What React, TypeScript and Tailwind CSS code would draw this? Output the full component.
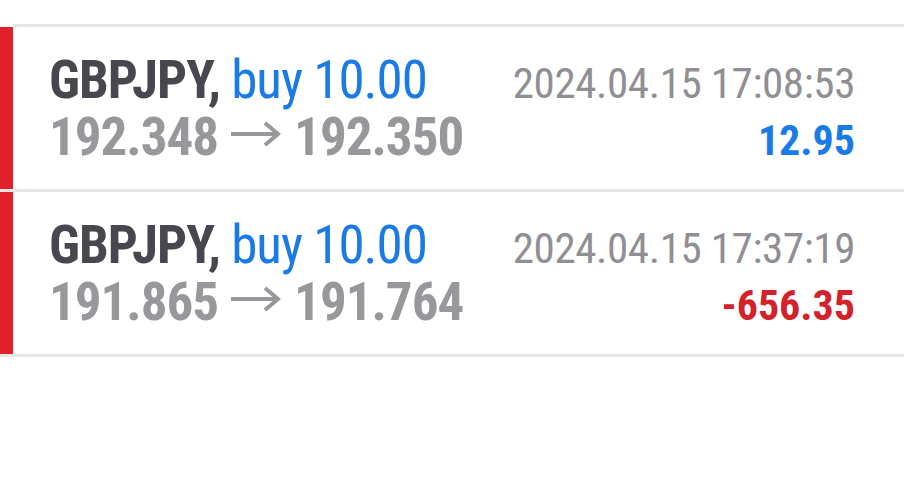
import React from "react";

type Deal = {
  symbol: string;
  side: string;
  volume: string;
  open: string;
  close: string;
  time: string;
  profit: string;
  loss?: boolean;
};

const deals: Deal[] = [
  {
    symbol: "GBPJPY",
    side: "buy",
    volume: "10.00",
    open: "192.348",
    close: "192.350",
    time: "2024.04.15 17:08:53",
    profit: "12.95",
  },
  {
    symbol: "GBPJPY",
    side: "buy",
    volume: "10.00",
    open: "191.865",
    close: "191.764",
    time: "2024.04.15 17:37:19",
    profit: "-656.35",
    loss: true,
  },
];

function Arrow() {
  return (
    <svg
      width="50"
      height="26"
      viewBox="0 0 50 26"
      className="inline-block align-[8px] mx-[13px]"
      fill="none"
      stroke="#97979c"
      strokeWidth="4"
    >
      <line x1="0" y1="13" x2="46" y2="13" />
      <polyline points="34,2 47,13 34,24" strokeLinejoin="miter" />
    </svg>
  );
}

function DealRow({ deal }: { deal: Deal }) {
  return (
    <div className="flex border-b-[3px] border-[#e6e6e6]">
      <div className="w-[13px] shrink-0 bg-[#e0202a]" />
      <div className="flex-1 flex flex-col pl-[36px] pr-[49px] pt-[25px] pb-[23px]">
        <div className="flex items-baseline justify-between h-[57px] leading-[57px]">
          <span className="text-[53px] font-bold tracking-[-1px] text-[#47474f]">
            {deal.symbol},{" "}
            <span className="font-normal text-[#1a7be6]">
              {deal.side} {deal.volume}
            </span>
          </span>
          <span className="text-[43px] tracking-[-0.4px] text-[#8f8f94]">
            {deal.time}
          </span>
        </div>
        <div className="flex items-baseline justify-between h-[57px] leading-[57px]">
          <span className="text-[53px] font-bold tracking-[-1px] text-[#97979c] whitespace-nowrap">
            {deal.open}
            <Arrow />
            {deal.close}
          </span>
          <span
            className={
              "text-[42px] font-bold " +
              (deal.loss ? "text-[#d3222a]" : "text-[#1a7be6]")
            }
          >
            {deal.profit}
          </span>
        </div>
      </div>
    </div>
  );
}

export default function App() {
  return (
    <div
      className="w-[904px] h-[480px] bg-white overflow-hidden"
      style={{ fontFamily: '"Roboto Condensed", Roboto, sans-serif' }}
    >
      <div className="h-[24px]" />
      <div className="ml-[13px] border-b-[3px] border-[#e6e6e6]" />
      {deals.map((d, i) => (
        <DealRow key={i} deal={d} />
      ))}
    </div>
  );
}
